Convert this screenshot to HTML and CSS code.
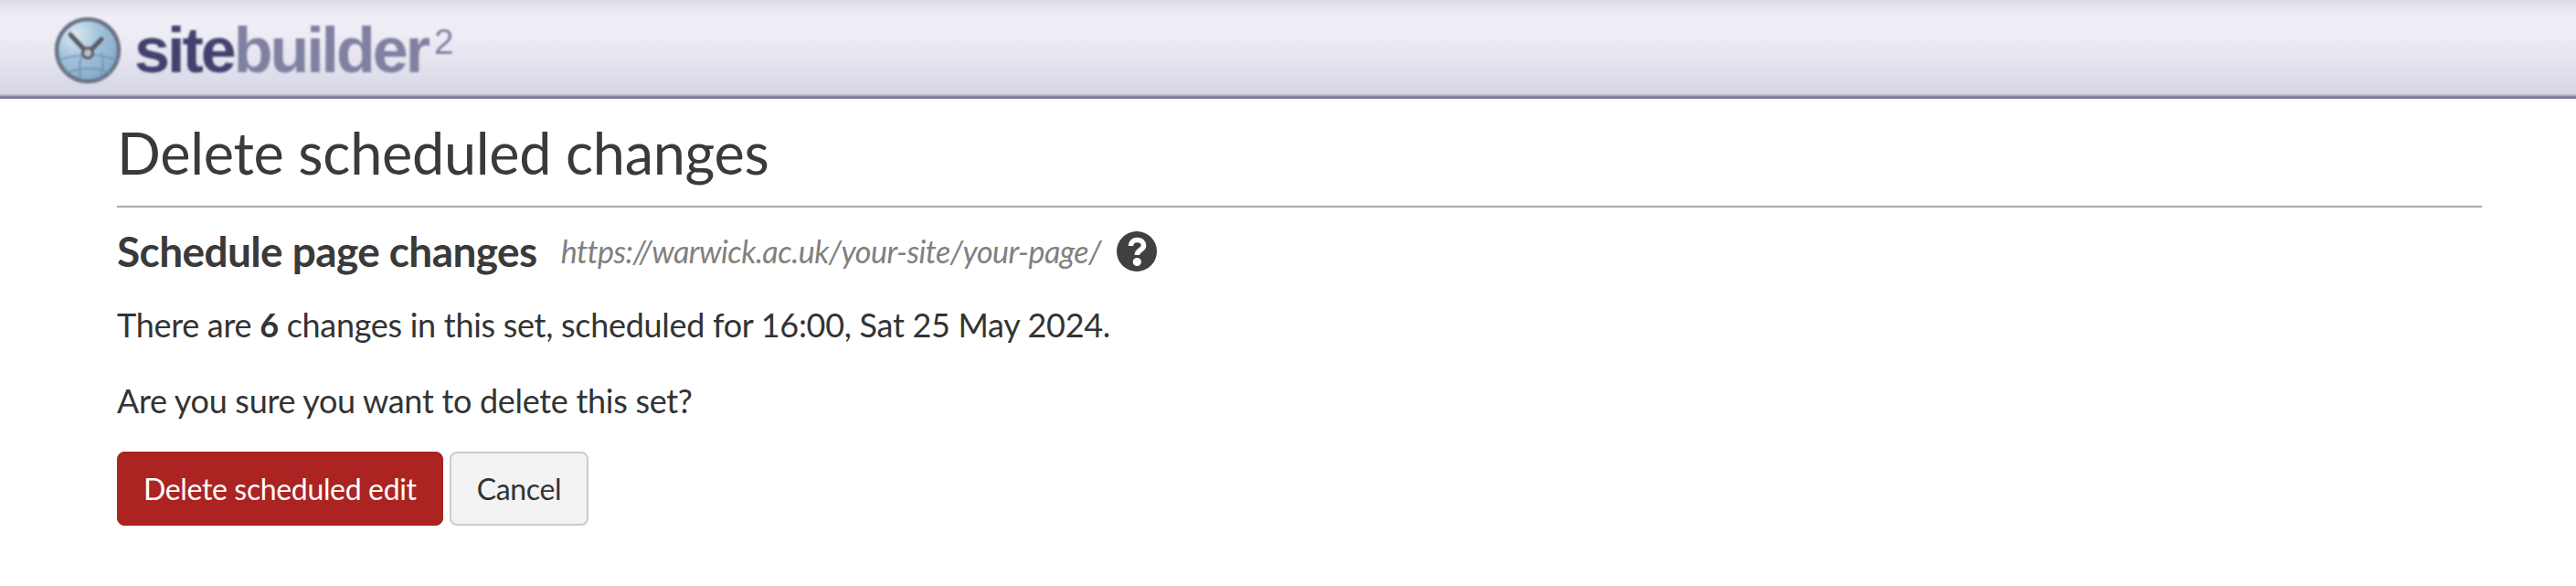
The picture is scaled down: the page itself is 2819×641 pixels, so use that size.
FILE: index.html
```html
<!DOCTYPE html>
<html lang="en">
<head>
    <meta charset="UTF-8">
    <meta name="viewport" content="width=device-width, initial-scale=1.0">
    <title>Delete scheduled changes</title>
    <link rel="stylesheet" href="styles.css">
</head>
<body>
    <header class="masthead">
        <div class="logo">
            <svg class="logo-globe" width="74" height="74" viewBox="0 0 74 74" aria-hidden="true">
                <defs>
                    <radialGradient id="globeFill" cx="0.3" cy="0.25" r="0.85">
                        <stop offset="0" stop-color="#dce9f1"/>
                        <stop offset="0.45" stop-color="#a3c3dc"/>
                        <stop offset="1" stop-color="#7fa6c8"/>
                    </radialGradient>
                </defs>
                <circle cx="37" cy="37" r="34" fill="url(#globeFill)" stroke="#6a7488" stroke-width="4.5"/>
                <path d="M5 48 Q37 36 70 48 M14 62 Q38 52 62 62 M30 44 Q26 56 30 70 M52 40 Q56 54 50 68" fill="none" stroke="#6f90b0" stroke-width="1.6"/>
                <path d="M18 20 L34 37 M52 25 L40 37" stroke="#5b5a66" stroke-width="5" stroke-linecap="round"/>
                <circle cx="37" cy="40" r="5.5" fill="#b9c3cf" stroke="#5b5a66" stroke-width="3"/>
            </svg>
            <span class="logo-text"><span class="logo-site">site</span>builder<sup class="logo-two">2</sup></span>
        </div>
    </header>
    <main class="content">
        <h1 class="page-title">Delete scheduled changes</h1>
        <div class="sub-heading">
            <h2>Schedule page changes</h2>
            <span class="page-url">https://warwick.ac.uk/your-site/your-page/</span>
            <svg class="help-icon" width="44" height="44" viewBox="0 0 44 44" aria-hidden="true">
                <circle cx="22" cy="22" r="22" fill="#404040"/>
                <path d="M15.5 16 C15.5 12 18.5 9.5 22.5 9.5 C26.5 9.5 29.5 12 29.5 15.5 C29.5 18 28 19.2 25.8 20.6 C23.6 22 22.3 23 22.3 26" fill="none" stroke="#fff" stroke-width="5.6"/>
                <circle cx="22.3" cy="33.5" r="4.6" fill="#fff"/>
            </svg>
        </div>
        <p>There are <strong>6</strong> changes in this set, scheduled for 16:00, Sat 25 May 2024.</p>
        <p>Are you sure you want to delete this set?</p>
        <div class="actions">
            <button type="button" class="btn btn-danger">Delete scheduled edit</button>
            <button type="button" class="btn btn-default">Cancel</button>
        </div>
    </main>
</body>
</html>
```

FILE: styles.css
```css
body {
    margin: 0;
    font-family: Lato, "Open Sans", sans-serif;
    font-size: 36px;
    line-height: 50px;
    letter-spacing: -0.3px;
    color: #333;
    background: #fff;
}
.masthead {
    height: 108px;
    background: linear-gradient(to bottom, #dcdcea 0, #efeef6 18px, #eeedf5 40px, #d7d6e6 102px, #b9b8cf 104px, #77759a 106px, #77759a 108px);
}
.logo {
    display: flex;
    align-items: center;
    gap: 14px;
    height: 110px;
    padding-left: 59px;
}
.logo-globe {
    filter: blur(0.8px);
}
.logo-text {
    font-family: "Liberation Sans", Arial, sans-serif;
    font-size: 70px;
    line-height: 1;
    font-weight: 700;
    letter-spacing: -3px;
    color: #8080a2;
    filter: blur(0.8px);
}
.logo-site {
    color: #42426f;
}
.logo-two {
    font-size: 39px;
    font-weight: 400;
    letter-spacing: 0;
    vertical-align: 20px;
    line-height: 0;
    margin-left: 7px;
}
.content {
    padding: 0 103px 0 128px;
}
.page-title {
    margin: 0;
    padding: 20px 0 19px;
    border-bottom: 2px solid #aaa;
    font-size: 63px;
    line-height: 78px;
    font-weight: 400;
    letter-spacing: -0.3px;
    color: #3a3a3a;
}
.sub-heading {
    display: flex;
    align-items: center;
    gap: 26px;
    margin-top: 25px;
}
.sub-heading h2 {
    margin: 0;
    font-size: 46px;
    line-height: 45px;
    font-weight: 700;
    letter-spacing: -0.6px;
    color: #3a3a3a;
}
.page-url {
    font-size: 34px;
    line-height: 1;
    font-style: italic;
    letter-spacing: -0.5px;
    color: #808080;
}
.help-icon {
    margin-left: -9px;
}
p {
    margin: 33px 0 0;
}
.actions {
    display: flex;
    gap: 7px;
    margin-top: 31px;
}
.btn {
    height: 81px;
    padding: 0 28px;
    border-radius: 8px;
    font-family: inherit;
    font-size: 32px;
    letter-spacing: -0.35px;
}
.btn-danger {
    border: 1px solid #ab2421;
    background: #ab2421;
    color: #fff;
}
.btn-default {
    border: 2px solid #ccc;
    background: #f3f3f3;
    color: #333;
}
```
